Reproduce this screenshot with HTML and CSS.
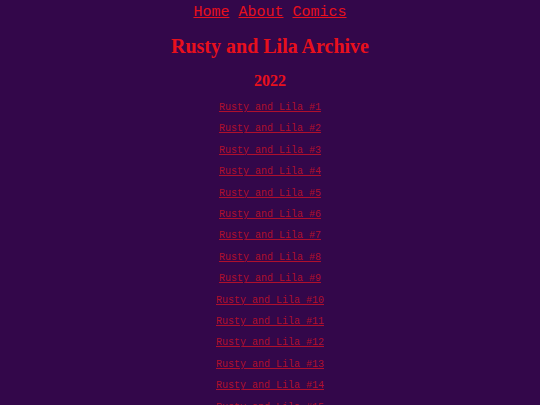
FILE: index.html
```html
<!DOCTYPE html>
<html lang="en">
<head>
    <meta charset="UTF-8" />
    <meta name="viewport" content="width=device-width, initial-scale=1.0"/>
    <title>Archive | Rusty and Lila</title>
    <link rel="stylesheet" href="styles.css">
</head>
<body>
<nav class="nav">
    <a href="/">Home</a>
    <a href="/about">About</a>
    <a href="/comics">Comics</a>
</nav>

<h1>Rusty and Lila Archive</h1>

<section class="year">
    <h2>2022</h2>
    <p><a href="/comics/1">Rusty and Lila #1</a></p>
    <p><a href="/comics/2">Rusty and Lila #2</a></p>
    <p><a href="/comics/3">Rusty and Lila #3</a></p>
    <p><a href="/comics/4">Rusty and Lila #4</a></p>
    <p><a href="/comics/5">Rusty and Lila #5</a></p>
    <p><a href="/comics/6">Rusty and Lila #6</a></p>
    <p><a href="/comics/7">Rusty and Lila #7</a></p>
    <p><a href="/comics/8">Rusty and Lila #8</a></p>
    <p><a href="/comics/9">Rusty and Lila #9</a></p>
    <p><a href="/comics/10">Rusty and Lila #10</a></p>
    <p><a href="/comics/11">Rusty and Lila #11</a></p>
    <p><a href="/comics/12">Rusty and Lila #12</a></p>
    <p><a href="/comics/13">Rusty and Lila #13</a></p>
    <p><a href="/comics/14">Rusty and Lila #14</a></p>
    <p><a href="/comics/15">Rusty and Lila #15</a></p>
</section>
</body>
</html>
```

FILE: styles.css
```css
body {
    margin: 0;
    background-color: #33074a;
    color: #e8101c;
    font-family: "Liberation Serif", "Times New Roman", serif;
    text-align: center;
}

a {
    color: #e8101c;
}

.nav {
    padding-top: 4px;
    font-family: "Liberation Mono", "Courier New", monospace;
    font-size: 15px;
}

h1 {
    font-size: 20px;
    margin: 14px 0 0;
}

h2 {
    font-size: 16px;
    margin: 14px 0 12px;
}

.year p {
    font-family: "Liberation Mono", "Courier New", monospace;
    font-size: 10px;
    line-height: 11.4px;
    margin: 10px 0;
}

.year a {
    color: #b0102c;
}
```
